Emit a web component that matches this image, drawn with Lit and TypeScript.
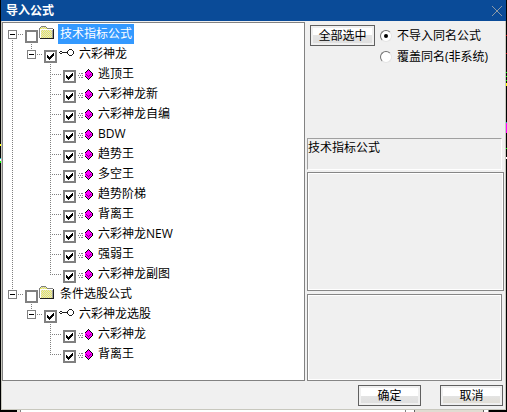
import { LitElement, html, svg, css, nothing } from "lit";
import { customElement, state } from "lit/decorators.js";
import { classMap } from "lit/directives/class-map.js";

interface FormulaNode {
  name: string;
  checked?: boolean;
  children?: FormulaNode[];
}

const leaf = (name: string): FormulaNode => ({ name, checked: true });

const FORMULAS: FormulaNode[] = [
  {
    name: "技术指标公式",
    children: [
      {
        name: "六彩神龙",
        checked: true,
        children: [
          "逃顶王", "六彩神龙新", "六彩神龙自编", "BDW", "趋势王", "多空王",
          "趋势阶梯", "背离王", "六彩神龙NEW", "强弱王", "六彩神龙副图",
        ].map(leaf),
      },
    ],
  },
  {
    name: "条件选股公式",
    children: [
      { name: "六彩神龙选股", checked: true, children: ["六彩神龙", "背离王"].map(leaf) },
    ],
  },
];

const folderIcon = html`<svg class="icon" width="16" height="14" viewBox="0 0 16 14" shape-rendering="crispEdges" aria-hidden="true">
  <path d="M1 2h1v-1h5v1h1v1h6v9H1z" fill="#ecec50" />
  <path d="M2 1.5H7M3 2.5H7M2 4.5H13M3 5.5H13M2 6.5H13M3 7.5H13M2 8.5H13M3 9.5H13M2 10.5H13M3 11.5H13" stroke="#dcdcdc" stroke-dasharray="1 1" fill="none" />
  <path d="M2 0h5v1H2zM1 1h1v1H1zM7 1h1v1H7zM0 2h1v10H0zM8 2h6v1H8z" fill="#808080" />
  <path d="M1 3h13v1H1zM1 4h1v8H1z" fill="#ffffff" />
  <path d="M13 4h1v8h-1z" fill="#a0a0a0" />
  <path d="M14 3h1v10H1v-1h13z" fill="#202020" />
</svg>`;

const groupIcon = html`<svg class="icon" width="16" height="14" viewBox="0 0 16 14" shape-rendering="crispEdges" aria-hidden="true">
  <path d="M1 5h2v1H1zM0 6h1v1H0zM1 7h2v1H1zM3 6h5v1H3zM8 5h1v3H8zM9 4h1v1H9zM9 8h1v1H9zM10 3h3v1h-3zM10 9h3v1h-3zM13 4h1v1h-1zM13 8h1v1h-1zM14 5h1v3h-1z" fill="#202020" />
</svg>`;

const formulaIcon = html`<svg class="icon" width="16" height="14" viewBox="0 -1 16 14" shape-rendering="crispEdges" aria-hidden="true">
  <path d="M1 6h1v1H1zM3 6h2v1H3zM0 8h1v1H0zM2 8h1v1H2zM4 8h1v1H4zM1 10h1v1H1zM3 10h2v1H3z" fill="#808080" />
  <path d="M10 2h1v1h1v1h1v1h1v1h1v3h-1v1h-1v1h-1v1h-1v1h-1v-1H9v-1H8v-1H7V5h1V4h1V3h1z" fill="#ff00ff" />
  <path d="M10 2h1v1h-1zM9 3h1v1H9zM11 3h1v1h-1zM8 4h1v1H8zM12 4h1v1h-1zM7 5h1v1H7zM13 5h1v1h-1zM14 6h1v3h-1zM13 9h1v1h-1zM12 10h1v1h-1zM11 11h1v1h-1zM10 12h1v1h-1zM9 11h1v1H9zM8 10h1v1H8zM7 9h1v1H7z" fill="#000000" />
  <path d="M8 7h1v1H8zM9 8h1v1H9zM10 9h1v1h-1zM11 8h1v1h-1zM12 7h1v1h-1z" fill="#800080" />
</svg>`;

const ICONS = [folderIcon, groupIcon, formulaIcon];

@customElement("formula-tree")
export class FormulaTree extends LitElement {
  static styles = css`
    :host {
      display: block;
      padding: 1px 0 16px;
      background: #ffffff;
      border: 1px solid #828282;
      overflow: hidden;
    }
    .list {
      list-style: none;
      margin: 0;
      padding: 0;
    }
    .row {
      display: flex;
      align-items: center;
      height: 20px;
      white-space: nowrap;
    }
    .guide {
      flex: none;
      width: 19px;
      height: 20px;
    }
    .branch {
      flex: none;
      width: 22px;
      height: 20px;
      padding: 0;
      border: 0;
      background: none;
      line-height: 0;
    }
    .tick {
      appearance: none;
      flex: none;
      box-sizing: border-box;
      width: 13px;
      height: 13px;
      margin: 5px 0 0;
      border: 2px solid #808080;
      background: #ffffff;
    }
    .tick:checked::before {
      content: "";
      display: block;
      width: 7px;
      height: 7px;
      margin: 1px;
      background: #000000;
      clip-path: polygon(0 2px, 1px 2px, 1px 3px, 2px 3px, 2px 4px, 3px 4px, 3px 3px, 4px 3px, 4px 2px, 5px 2px, 5px 1px, 6px 1px, 6px 0, 7px 0, 7px 3px, 6px 3px, 6px 4px, 5px 4px, 5px 5px, 4px 5px, 4px 6px, 3px 6px, 3px 7px, 2px 7px, 2px 6px, 1px 6px, 1px 5px, 0 5px);
    }
    .icon {
      display: block;
      flex: none;
      margin: 0 2px 2px;
    }
    .folder .icon {
      margin: 0 3px 2px 1px;
    }
    .name {
      padding: 0 2px;
      line-height: 20px;
    }
    .selected {
      background: #3399ff;
      color: #ffffff;
    }
  `;

  @state() private selected = "0";

  private dots(d: string) {
    return svg`<path d=${d} stroke="#808080" stroke-dasharray="1 1" fill="none" />`;
  }

  private branch(node: FormulaNode, first: boolean, last: boolean) {
    const drawing = html`<svg width="22" height="20" viewBox="0 0 22 20" shape-rendering="crispEdges" aria-hidden="true">
      ${first ? nothing : this.dots("M9.5 0V10")}
      ${last ? nothing : this.dots("M9.5 10V20")}
      ${this.dots("M9 10.5H21")}
      ${node.children
        ? svg`<rect x="5.5" y="6.5" width="8" height="8" fill="#ffffff" stroke="#808080" /><path d="M7 10.5h5" stroke="#000000" />`
        : nothing}
    </svg>`;
    return node.children
      ? html`<button class="branch" type="button" aria-label="折叠 ${node.name}">${drawing}</button>`
      : html`<span class="branch">${drawing}</span>`;
  }

  private nodes(list: FormulaNode[], path: string[], trail: boolean[]): unknown {
    const level = trail.length;
    return html`<ul class="list">
      ${list.map((node, i) => {
        const id = [...path, String(i)].join("-");
        const last = i === list.length - 1;
        return html`<li>
          <div class=${classMap({ row: true, folder: level === 0 })}>
            ${trail.map(
              (open) => html`<svg class="guide" viewBox="0 0 19 20" shape-rendering="crispEdges" aria-hidden="true">
                ${open ? this.dots("M9.5 0V20") : nothing}
              </svg>`
            )}
            ${this.branch(node, level === 0 && i === 0, last)}
            <input class="tick" type="checkbox" id="n${id}" .checked=${!!node.checked} />
            ${ICONS[level]}
            <label
              class=${classMap({ name: true, selected: this.selected === id })}
              for="n${id}"
              @click=${() => (this.selected = id)}
            >${node.name}</label>
          </div>
          ${node.children ? this.nodes(node.children, [...path, String(i)], [...trail, !last]) : nothing}
        </li>`;
      })}
    </ul>`;
  }

  render() {
    return this.nodes(FORMULAS, [], []);
  }
}

@customElement("app-root")
export class AppRoot extends LitElement {
  static styles = css`
    :host {
      display: grid;
      grid-template-columns: 1px minmax(0, 1fr) 1px;
      background: #000000;
      color: #000000;
      font: 12px/20px "Open Sans", "Noto Sans CJK SC", sans-serif;
    }
    .edge-left {
      background: linear-gradient(#000000 144px, #ffff00 144px 146px, #000000 146px 158px, #00c0c0 158px 159px, #ffffff 159px 161px, #00ff00 161px 163px, #000000 163px);
    }
    .edge-right {
      background: linear-gradient(#000000 35px, #c00000 35px 36px, #000000 36px 53px, #c00000 53px 54px, #000000 54px 72px, #00ff00 72px 73px, #000000 73px 76px, #00ff00 76px 77px, #000000 77px 80px, #00ff00 80px 81px, #000000 81px 83px, #ffff00 83px 86px, #000000 86px 122px, #00c0c0 122px 123px, #ff00ff 123px 133px, #000000 133px 148px, #00ff00 148px 149px, #000000 149px 157px, #ffffff 157px 159px, #000000 159px);
    }
    .dialog {
      display: flex;
      flex-direction: column;
      background: #f0f0f0;
    }
    .titlebar {
      display: flex;
      align-items: center;
      justify-content: space-between;
      height: 21px;
      padding: 0 3px 0 5px;
      background: #0a4b98;
      color: #ffffff;
    }
    .title {
      margin: 0;
      font-size: 12px;
      font-weight: 700;
      line-height: 20px;
    }
    .close {
      padding: 0;
      border: 0;
      background: none;
      line-height: 0;
    }
    .content {
      display: grid;
      grid-template-columns: minmax(0, 1fr) 198px;
      column-gap: 2px;
      padding-top: 1px;
      border: solid #c8c8be;
      border-width: 0 1px;
    }
    .side {
      display: flex;
      flex-direction: column;
    }
    .options {
      display: flex;
      gap: 5px;
      height: 113px;
      padding: 3px 0 0 3px;
    }
    .push {
      box-sizing: border-box;
      width: 63px;
      height: 21px;
      padding: 0;
      border: 1px solid #606060;
      background: linear-gradient(#ffffff 50%, #e4e4e4 50%, #dedede);
      box-shadow: inset 0 0 0 2px #f0f0f0;
      color: #000000;
      font: inherit;
      line-height: 19px;
    }
    .wide {
      width: 65px;
    }
    .modes {
      min-width: 0;
      margin: 0;
      padding: 0;
      border: 0;
    }
    .mode {
      display: flex;
      align-items: center;
      gap: 5px;
      height: 21px;
      white-space: nowrap;
    }
    .radio {
      appearance: none;
      box-sizing: border-box;
      width: 12px;
      height: 12px;
      margin: 0;
      border: 1px solid;
      border-color: #707070 #e4e4e4 #e4e4e4 #707070;
      border-radius: 50%;
      background: #ffffff;
    }
    .radio:checked::before {
      content: "";
      display: block;
      width: 4px;
      height: 4px;
      margin: 3px;
      border-radius: 50%;
      background: #000000;
    }
    .current {
      box-sizing: border-box;
      height: 32px;
      margin-right: 3px;
      border: 1px solid;
      border-color: #a0a0a0 #ffffff #ffffff #a0a0a0;
      line-height: 18px;
    }
    .pane {
      box-sizing: border-box;
      border: 1px solid #868686;
      box-shadow: inset 0 0 0 1px #ffffff;
    }
    .summary {
      height: 119px;
      margin: 2px 1px 3px 0;
    }
    .detail {
      flex: 1;
      margin-right: 3px;
    }
    .actions {
      display: flex;
      justify-content: flex-end;
      gap: 19px;
      padding: 4px 2px 3px;
      border: solid #c8c8be;
      border-width: 0 1px 1px;
    }
    .warm {
      background: linear-gradient(#ffffff 50%, #e4e4e4 50%, #e0dcd2);
    }
    .behind {
      display: flex;
      grid-column: 2;
      height: 3px;
      padding: 0 17px 0 16px;
    }
    .margin {
      box-sizing: border-box;
      width: 3px;
      background: #e4e0d8;
    }
    .sheet {
      flex: 1;
      background: #ffffff;
      border: solid #808080;
      border-width: 0 1px;
    }
    .gap {
      width: 8px;
      background: #ffffff;
    }
    .stub {
      box-sizing: border-box;
      width: 70px;
      background: #e0dcd2;
      border: solid #606060;
      border-width: 0 1px;
    }
    .tail {
      box-sizing: border-box;
      width: 5px;
      background: #ffffff;
      border-right: 1px solid #808080;
    }
  `;

  render() {
    return html`
      <div class="edge-left"></div>
      <main class="dialog">
        <header class="titlebar">
          <h1 class="title">导入公式</h1>
          <button class="close" type="button" aria-label="关闭">
            <svg width="12" height="12" viewBox="0 0 12 12" aria-hidden="true">
              <path d="M1 1l10 10M11 1L1 11" stroke="#8c99a6" fill="none" />
            </svg>
          </button>
        </header>
        <div class="content">
          <formula-tree></formula-tree>
          <section class="side">
            <div class="options">
              <button class="push wide" type="button">全部选中</button>
              <fieldset class="modes">
                <label class="mode"><input class="radio" type="radio" name="mode" checked />不导入同名公式</label>
                <label class="mode"><input class="radio" type="radio" name="mode" />覆盖同名(非系统)</label>
              </fieldset>
            </div>
            <div class="current">技术指标公式</div>
            <div class="pane summary"></div>
            <div class="pane detail"></div>
          </section>
        </div>
        <footer class="actions">
          <button class="push" type="button">确定</button>
          <button class="push warm" type="button">取消</button>
        </footer>
      </main>
      <div class="edge-right"></div>
      <div class="behind">
        <div class="margin"></div>
        <div class="sheet"></div>
        <div class="gap"></div>
        <div class="stub"></div>
        <div class="tail"></div>
      </div>
    `;
  }
}
